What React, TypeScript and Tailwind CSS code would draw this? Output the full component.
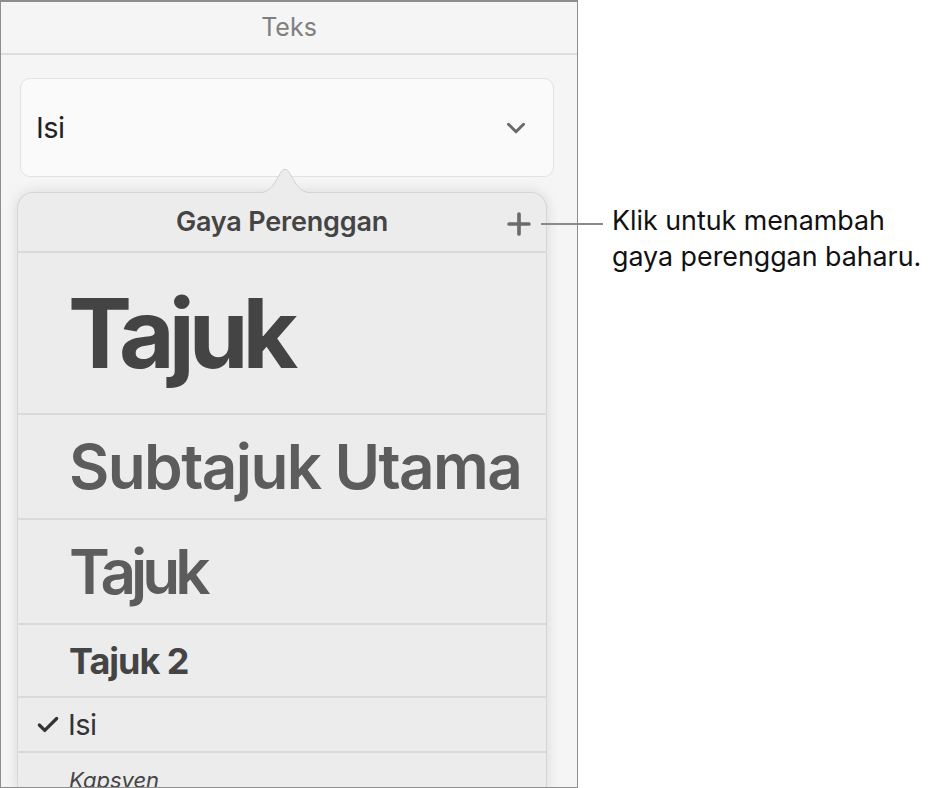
import { ChevronDown, Plus, Check } from 'lucide-react';

const font = { fontFamily: 'Inter, "Noto Sans", sans-serif' };

export default function App() {
  return (
    <div className="relative flex h-[788px] w-[937px] bg-white" style={font}>
      {/* Inspector panel */}
      <div className="flex h-[788px] w-[578px] shrink-0 flex-col overflow-hidden border border-t-2 border-[#8e8e8e] bg-[#f5f5f5]">
        <div className="flex h-[53px] shrink-0 items-center justify-center border-b-2 border-[#dedede] text-[25px] text-[#7f7f7f]">
          Teks
        </div>

        <div className="relative ml-[19px] mt-[23px] flex h-[99px] w-[534px] shrink-0 items-center justify-between rounded-[10px] border border-[#e2e2e2] bg-[#fafafa] pl-[15px] pr-[22px]">
          <span className="text-[29px] tracking-[-0.5px] text-[#222]">Isi</span>
          <ChevronDown size={30} strokeWidth={2.4} className="text-[#6a6a6a]" />
        </div>

        {/* Popover */}
        <div className="relative ml-[16px] mt-[15px] w-[530px] flex-1 rounded-t-[16px] border border-b-0 border-[#d6d6d6] bg-[#ececec] shadow-[0_0_14px_rgba(0,0,0,0.12)]">
          <svg
            className="absolute left-[232px] top-[-27px]"
            width="70"
            height="28"
            viewBox="0 0 70 28"
          >
            <path
              d="M0 27.5 C14 27.5 18 26 24 18 L31 6 C33 2.5 37 2.5 39 6 L46 18 C52 26 56 27.5 70 27.5 Z"
              fill="#ececec"
              stroke="#d2d2d2"
              strokeWidth="1"
            />
            <rect x="0" y="27" width="70" height="2" fill="#ececec" />
          </svg>

          <div className="relative flex h-[60px] items-center justify-center border-b-2 border-[#dadada]">
            <span className="text-[27px] font-semibold tracking-[-0.2px] text-[#444]">Gaya Perenggan</span>
            <Plus size={34} strokeWidth={2.6} className="absolute right-[10px] top-[14px] text-[#6c6c6c]" />
          </div>

          <div className="flex h-[162px] items-center border-b-2 border-[#dadada] pl-[50px]">
            <span className="text-[96px] leading-none font-bold tracking-[-6px] text-[#444]">Tajuk</span>
          </div>
          <div className="flex h-[105px] items-center border-b-2 border-[#dadada] pl-[51px]">
            <span className="text-[62px] leading-none font-semibold tracking-[-1.6px] text-[#5c5c5c]">Subtajuk Utama</span>
          </div>
          <div className="flex h-[105px] items-center border-b-2 border-[#dadada] pl-[51px]">
            <span className="text-[62px] leading-none font-semibold tracking-[-5px] text-[#5c5c5c]">Tajuk</span>
          </div>
          <div className="flex h-[73px] items-center border-b-2 border-[#dadada] pl-[51px]">
            <span className="text-[36px] leading-none font-bold tracking-[-1px] text-[#444]">Tajuk 2</span>
          </div>
          <div className="flex h-[55px] items-center border-b-2 border-[#dadada] pl-[17px]">
            <Check size={26} strokeWidth={3} className="text-[#333]" />
            <span className="ml-[7px] text-[29px] leading-none tracking-[-0.5px] text-[#333]">Isi</span>
          </div>
          <div className="flex h-[38px] items-end pl-[51px]">
            <span className="text-[22px] italic leading-none text-[#444]">Kapsyen</span>
          </div>
        </div>
      </div>

      {/* Callout */}
      <div className="absolute left-[541px] top-[223px] h-[2px] w-[62px] bg-[#8a8a8a]" />
      <div className="ml-[34px] mt-[202px] text-[26.8px] leading-[36px] text-[#111]">
        <div>Klik untuk menambah</div>
        <div>gaya perenggan baharu.</div>
      </div>
    </div>
  );
}
